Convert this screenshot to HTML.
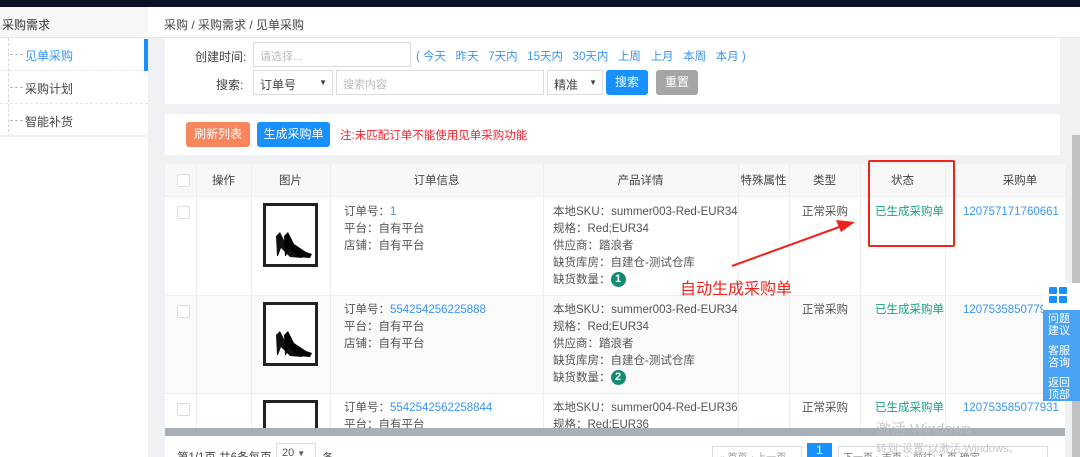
<!DOCTYPE html>
<html><head><meta charset="utf-8"><style>
*{margin:0;padding:0;box-sizing:border-box}
html,body{width:1080px;height:457px;overflow:hidden}
body{background:#eff1f4;font-family:"Liberation Sans","Noto Sans CJK SC",sans-serif;font-size:12px;color:#555;position:relative}
.a{position:absolute;white-space:nowrap}
.tb td,.tb th{border-right:1px solid #eceef0;border-bottom:1px solid #eceef0;vertical-align:top;font-weight:normal}
.cb{width:13px;height:13px;border:1px solid #ddd;background:#fff;border-radius:2px;position:absolute}
.shoe{position:absolute;width:55px;height:64px;border:3px solid #222;background:#fff}
.ln{position:absolute;line-height:17px;font-size:11.5px;color:#555;white-space:nowrap}
.blue{color:#3a96ee !important}
.green{color:#17a085 !important}
.badge{display:inline-block;width:15px;height:15px;border-radius:50%;background:#138a72;color:#fff;font-size:11px;text-align:center;line-height:15px;font-weight:bold;vertical-align:middle}
</style></head><body>
<div class="a" style="left:0;top:0;width:1080px;height:7px;background:#0b1226"></div>
<div class="a" style="left:0;top:7px;width:148px;height:450px;background:#fff"></div>
<div class="a" style="left:0;top:7px;width:148px;height:31px;background:#f7f7f8;border-bottom:1px solid #e8e8e8;padding:9px 2px;color:#333">采购需求</div>
<div class="a" style="left:8px;top:38px;width:1px;height:99px;border-left:1px dashed #cfd8e3"></div>
<div class="a" style="left:0;top:38px;width:148px;height:33px;border-bottom:1px dashed #e3e6ea"></div>
<div class="a" style="left:0;top:71px;width:148px;height:33px;border-bottom:1px dashed #e3e6ea"></div>
<div class="a" style="left:0;top:104px;width:148px;height:33px;border-bottom:2px solid #eef0f3"></div>
<div class="a" style="left:144px;top:39px;width:4px;height:32px;background:#1890ff"></div>
<div class="a" style="left:10px;top:54px;width:13px;border-top:1px dashed #bbb"></div>
<div class="a" style="left:10px;top:87px;width:13px;border-top:1px dashed #bbb"></div>
<div class="a" style="left:10px;top:120px;width:13px;border-top:1px dashed #bbb"></div>
<div class="a" style="left:25px;top:47px;color:#3a96ee">见单采购</div>
<div class="a" style="left:25px;top:80px;color:#444">采购计划</div>
<div class="a" style="left:25px;top:113px;color:#444">智能补货</div>
<div class="a" style="left:148px;top:7px;width:932px;height:31px;background:#fff;border-bottom:1px solid #e6e6e6;padding:9px 16px;color:#444">采购 / 采购需求 / 见单采购</div>
<div class="a" style="left:165px;top:38px;width:895px;height:66px;background:#fff"></div>
<div class="a" style="left:195px;top:48px;color:#444">创建时间:</div>
<div class="a" style="left:253px;top:42px;width:158px;height:25px;border:1px solid #ddd;padding:5px 6px;color:#bbb;font-size:11px">请选择...</div>
<div class="a" style="left:416px;top:48px;color:#3a96ee;font-size:11.5px">(&nbsp;今天&nbsp;&nbsp;&nbsp;昨天&nbsp;&nbsp;&nbsp;7天内&nbsp;&nbsp;&nbsp;15天内&nbsp;&nbsp;&nbsp;30天内&nbsp;&nbsp;&nbsp;上周&nbsp;&nbsp;&nbsp;上月&nbsp;&nbsp;&nbsp;本周&nbsp;&nbsp;&nbsp;本月&nbsp;)</div>
<div class="a" style="left:216px;top:76px;color:#444">搜索:</div>
<div class="a" style="left:253px;top:70px;width:80px;height:25px;border:1px solid #ddd;padding:5px 6px;color:#444">订单号<span style="position:absolute;right:5px;font-size:8px;top:7px">▼</span></div>
<div class="a" style="left:336px;top:70px;width:208px;height:25px;border:1px solid #ddd;padding:5px 6px;color:#bbb;font-size:11px">搜索内容</div>
<div class="a" style="left:547px;top:70px;width:56px;height:25px;border:1px solid #ddd;padding:5px 6px;color:#444">精准<span style="position:absolute;right:5px;font-size:8px;top:7px">▼</span></div>
<div class="a" style="left:606px;top:70px;width:42px;height:25px;background:#1890ff;border-radius:3px;color:#fff;text-align:center;line-height:25px">搜索</div>
<div class="a" style="left:656px;top:70px;width:42px;height:25px;background:#a5a5a5;border-radius:3px;color:#fff;text-align:center;line-height:25px">重置</div>
<div class="a" style="left:165px;top:114px;width:895px;height:41px;background:#fff"></div>
<div class="a" style="left:186px;top:122px;width:64px;height:25px;background:#f7855e;border-radius:3px;color:#fff;text-align:center;line-height:25px">刷新列表</div>
<div class="a" style="left:257px;top:122px;width:73px;height:25px;background:#1890ff;border-radius:3px;color:#fff;text-align:center;line-height:25px">生成采购单</div>
<div class="a" style="left:340px;top:127px;color:#f5222d;font-size:11.5px">注:未匹配订单不能使用见单采购功能</div>
<div class="a" style="left:165px;top:164px;width:900px;height:268px;background:#fff;overflow:hidden">
<table class="tb" style="border-collapse:collapse;table-layout:fixed;width:930px">
<colgroup><col style="width:31px"><col style="width:55px"><col style="width:79px"><col style="width:213px"><col style="width:195px"><col style="width:51px"><col style="width:71px"><col style="width:85px"><col style="width:150px"></colgroup>
<tr style="height:32px;background:#f8f8f9;color:#444;font-size:11.5px"><th></th><th style="vertical-align:middle">操作</th><th style="vertical-align:middle">图片</th><th style="vertical-align:middle">订单信息</th><th style="vertical-align:middle">产品详情</th><th style="vertical-align:middle;white-space:nowrap">特殊属性</th><th style="vertical-align:middle">类型</th><th style="vertical-align:middle">状态</th><th style="vertical-align:middle">采购单</th></tr>
<tr style="height:99px"><td></td><td></td><td></td><td></td><td></td><td></td><td></td><td></td><td></td></tr>
<tr style="height:98px;background:#fafafa"><td></td><td></td><td></td><td></td><td></td><td></td><td></td><td></td><td></td></tr>
<tr style="height:60px"><td></td><td></td><td></td><td></td><td></td><td></td><td></td><td></td><td></td></tr>
</table>
</div>
<div class="cb" style="left:177px;top:174px"></div>
<div class="cb" style="left:177px;top:206px"></div>
<div class="cb" style="left:177px;top:305px"></div>
<div class="cb" style="left:177px;top:403px"></div>
<div class="shoe" style="left:263px;top:203px"><svg width="49" height="58"><path d="M10 30 L14 26 L20 38 L32 46 L38 48 L36 52 L24 51 L15 42 L12 50 L11 50 Z" fill="#111"/><path d="M18 30 L22 26 L28 38 L40 46 L46 48 L44 52 L32 51 L23 42 L20 50 L19 50 Z" fill="#000"/></svg></div>
<div class="shoe" style="left:263px;top:302px"><svg width="49" height="58"><path d="M10 30 L14 26 L20 38 L32 46 L38 48 L36 52 L24 51 L15 42 L12 50 L11 50 Z" fill="#111"/><path d="M18 30 L22 26 L28 38 L40 46 L46 48 L44 52 L32 51 L23 42 L20 50 L19 50 Z" fill="#000"/></svg></div>
<div class="a" style="left:263px;top:400px;width:55px;height:28px;border:3px solid #222;border-bottom:none;background:#fff"></div>
<div class="ln" style="left:344px;top:204px">订单号：<span class="blue">1</span><br>平台：自有平台<br>店铺：自有平台</div>
<div class="ln" style="left:344px;top:302px">订单号：<span class="blue">554254256225888</span><br>平台：自有平台<br>店铺：自有平台</div>
<div class="ln" style="left:344px;top:400px;height:28px;overflow:hidden">订单号：<span class="blue">5542542562258844</span><br>平台：自有平台</div>
<div class="ln" style="left:553px;top:204px">本地SKU：summer003-Red-EUR34<br>规格：Red;EUR34<br>供应商：踏浪者<br>缺货库房：自建仓-测试仓库<br>缺货数量：<span class="badge">1</span></div>
<div class="ln" style="left:553px;top:302px">本地SKU：summer003-Red-EUR34<br>规格：Red;EUR34<br>供应商：踏浪者<br>缺货库房：自建仓-测试仓库<br>缺货数量：<span class="badge">2</span></div>
<div class="ln" style="left:553px;top:400px;height:28px;overflow:hidden">本地SKU：summer004-Red-EUR36<br>规格：Red;EUR36</div>
<div class="ln" style="left:802px;top:204px">正常采购</div>
<div class="ln" style="left:802px;top:302px">正常采购</div>
<div class="ln" style="left:802px;top:400px">正常采购</div>
<div class="ln green" style="left:875px;top:204px">已生成采购单</div>
<div class="ln green" style="left:875px;top:302px">已生成采购单</div>
<div class="ln green" style="left:875px;top:400px">已生成采购单</div>
<div class="ln blue" style="left:963px;top:204px;width:102px;overflow:hidden">120757171760661</div>
<div class="ln blue" style="left:963px;top:302px;width:102px;overflow:hidden">120753585077931</div>
<div class="ln blue" style="left:963px;top:400px;width:102px;overflow:hidden">120753585077931</div>
<div class="a" style="left:165px;top:428px;width:900px;height:8px;background:#a7b0b8"></div>
<div class="a" style="left:165px;top:436px;width:900px;height:21px;background:#fff"></div>
<div class="a" style="left:177px;top:449px;color:#444;font-size:11.5px">第1/1页 共6条每页</div>
<div class="a" style="left:276px;top:443px;width:40px;height:18px;border:1px solid #ddd;padding:3px 5px;font-size:11px">20 <span style="font-size:8px">▼</span></div>
<div class="a" style="left:322px;top:449px">条</div>
<div class="a" style="left:712px;top:446px;width:90px;height:14px;border:1px solid #ddd;color:#999;padding:2px 6px;font-size:10px;overflow:hidden">« 首页 ‹ 上一页</div>
<div class="a" style="left:807px;top:443px;width:25px;height:16px;background:#1890ff;color:#fff;text-align:center">1</div>
<div class="a" style="left:838px;top:446px;width:210px;height:14px;border:1px solid #ddd;color:#777;padding:2px 4px;font-size:10px;overflow:hidden">下一页 › 末页 » 前往: 1 页 确定 →</div>
<div class="a" style="left:876px;top:418px;color:#bbb;font-size:15px;opacity:.8">激活 Windows</div>
<div class="a" style="left:876px;top:440px;color:#bbb;font-size:11px;opacity:.8">转到"设置"以激活 Windows。</div>
<div class="a" style="left:1065px;top:38px;width:15px;height:419px;background:#f1f1f1"></div>
<div class="a" style="left:1072px;top:135px;width:8px;height:322px;background:#c1c1c1"></div>
<div class="a" style="left:1043px;top:283px;width:37px;height:27px;background:#fff"></div>
<div class="a" style="left:1049px;top:287px;width:8px;height:7px;background:#1890ff;border-radius:1px"></div>
<div class="a" style="left:1059px;top:287px;width:8px;height:7px;background:#1890ff;border-radius:1px"></div>
<div class="a" style="left:1049px;top:296px;width:8px;height:7px;background:#1890ff;border-radius:1px"></div>
<div class="a" style="left:1059px;top:296px;width:8px;height:7px;background:#1890ff;border-radius:1px"></div>
<div class="a" style="left:1043px;top:310px;width:37px;height:91px;background:#4aa3f2;color:#fff;font-size:11px;line-height:12px;padding:3px 0 0 5px;white-space:normal">问题<br>建议<br><div style="height:8px"></div>客服<br>咨询<br><div style="height:8px"></div>返回<br>顶部</div>
<div class="a" style="left:868px;top:160px;width:87px;height:87px;border:2px solid #f0231c;border-radius:2px"></div>
<svg class="a" style="left:0;top:0" width="1080" height="457"><line x1="732" y1="266" x2="842" y2="226" stroke="#f0231c" stroke-width="2"/><polygon points="855,222 836,220 841,232" fill="#f0231c"/></svg>
<div class="a" style="left:680px;top:275px;color:#f0231c;font-size:16px">自动生成采购单</div>
</body></html>
